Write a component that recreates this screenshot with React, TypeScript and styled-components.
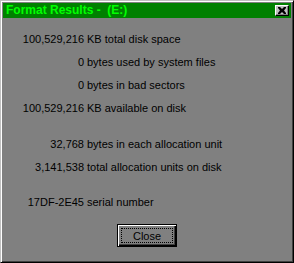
import React from "react";
import styled, { createGlobalStyle } from "styled-components";

const Global = createGlobalStyle`
  html, body { margin: 0; padding: 0; background: #808080; }
  * { box-sizing: border-box; }
`;

const Window = styled.div`
  width: 294px;
  height: 263px;
  background: #808080;
  border: 1px solid;
  border-color: #c0c0c0 #000 #000 #c0c0c0;
  box-shadow: inset 1px 1px #fff, inset -1px -1px #404040;
  padding: 2px;
  display: flex;
  flex-direction: column;
  font-family: "Liberation Sans", Arial, sans-serif;
`;

const TitleBar = styled.div`
  height: 15px;
  background: #008000;
  display: flex;
  align-items: center;
  justify-content: space-between;
  padding: 0 2px 0 3px;
`;

const Title = styled.span`
  color: #00ff00;
  font-weight: bold;
  font-size: 12px;
  white-space: pre;
  line-height: 15px;
`;

const CloseBox = styled.div`
  width: 14px;
  height: 11px;
  background: #c0c0c0;
  border: 1px solid;
  border-color: #fff #000 #000 #fff;
  box-shadow: inset -1px -1px #808080;
  display: flex;
  align-items: center;
  justify-content: center;
`;

const Content = styled.div`
  flex: 1;
  display: flex;
  flex-direction: column;
  padding-top: 10px;
`;

const Group = styled.div<{ $gap: number }>`
  display: grid;
  grid-template-columns: 81px auto;
  column-gap: 3px;
  margin-bottom: ${(p) => p.$gap}px;
`;

const Num = styled.div`
  text-align: right;
  font-size: 11px;
  line-height: 23px;
  color: #000;
  white-space: nowrap;
`;

const Desc = styled.div`
  font-size: 11px;
  line-height: 23px;
  color: #000;
  white-space: nowrap;
`;

const ButtonRow = styled.div`
  display: flex;
  justify-content: center;
  margin-top: auto;
  padding-bottom: 13px;
`;

const PushButton = styled.div`
  width: 60px;
  height: 23px;
  border: 1px solid #000;
  background: #808080;
  box-shadow: inset 1px 1px #fff, inset -1px -1px #000, inset -2px -2px #404040;
  display: flex;
  align-items: center;
  justify-content: center;
  padding: 3px;
`;

const Focus = styled.div`
  width: 100%;
  height: 100%;
  border: 1px dotted #000;
  display: flex;
  align-items: center;
  justify-content: center;
  font-size: 11px;
  color: #000;
`;

const rows1 = [
  ["100,529,216", "KB total disk space"],
  ["0", "bytes used by system files"],
  ["0", "bytes in bad sectors"],
  ["100,529,216", "KB available on disk"],
];
const rows2 = [
  ["32,768", "bytes in each allocation unit"],
  ["3,141,538", "total allocation units on disk"],
];
const rows3 = [["17DF-2E45", "serial number"]];

function Rows({ rows, gap }: { rows: string[][]; gap: number }) {
  return (
    <Group $gap={gap}>
      {rows.map(([n, d], i) => (
        <React.Fragment key={i}>
          <Num>{n}</Num>
          <Desc>{d}</Desc>
        </React.Fragment>
      ))}
    </Group>
  );
}

export default function App() {
  return (
    <>
      <Global />
      <Window>
        <TitleBar>
          <Title>{"Format Results -  (E:)"}</Title>
          <CloseBox>
            <svg width="8" height="7" viewBox="0 0 8 7">
              <path d="M0 0h2l2 2 2-2h2v1l-2 2.5 2 2.5v1h-2l-2-2-2 2h-2v-1l2-2.5-2-2.5z" fill="#000" />
            </svg>
          </CloseBox>
        </TitleBar>
        <Content>
          <Rows rows={rows1} gap={13} />
          <Rows rows={rows2} gap={12} />
          <Rows rows={rows3} gap={0} />
          <ButtonRow>
            <PushButton>
              <Focus>Close</Focus>
            </PushButton>
          </ButtonRow>
        </Content>
      </Window>
    </>
  );
}
